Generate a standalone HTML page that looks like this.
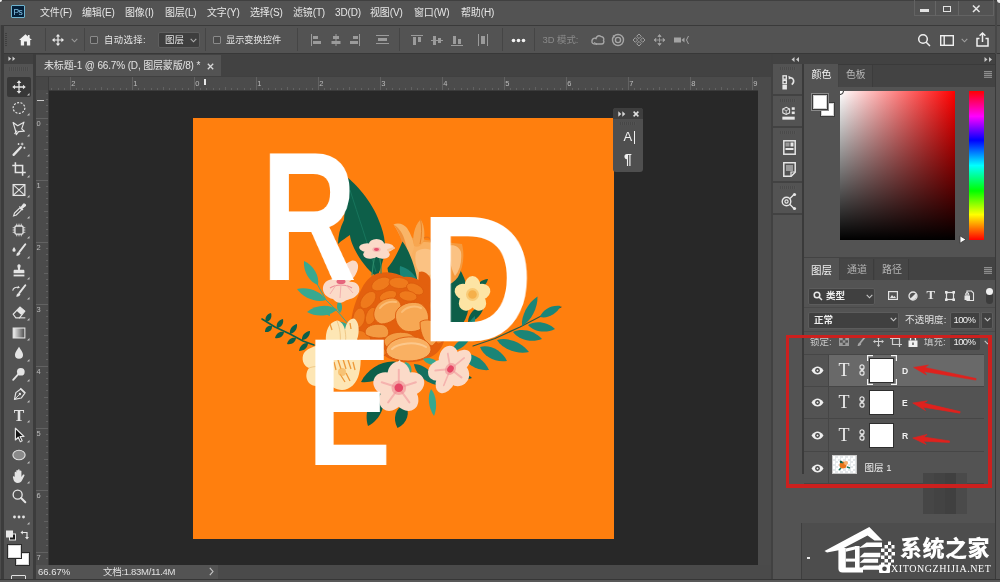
<!DOCTYPE html>
<html lang="zh-CN">
<head>
<meta charset="utf-8">
<title>Photoshop</title>
<style>
*{box-sizing:border-box;margin:0;padding:0}
html,body{width:1000px;height:582px;overflow:hidden;background:#535353}
body{font-family:"Liberation Sans","Noto Sans CJK SC",sans-serif;font-size:10px;color:#dcdcdc;position:relative}
.a{position:absolute}
.t{position:absolute;white-space:nowrap;line-height:12px;font-size:10px;color:#e2e2e2}
svg{position:absolute;overflow:visible}
#menubar{left:0;top:0;width:1000px;height:25px;background:#535353;border-top:1px solid #404040}
#menubar .t{top:6px;font-size:10px;color:#e6e6e6;letter-spacing:-0.15px}
#optbar{left:0;top:25px;width:1000px;height:29px;background:#535353;border-top:1px solid #3a3a3a;border-bottom:1px solid #383838}
.sep{position:absolute;top:28px;width:1px;height:23px;background:#454545}
.cb{position:absolute;top:36px;width:8px;height:8px;border:1px solid #8a8a8a;border-radius:1px;background:#4a4a4a}
#toolbar{left:0;top:54px;width:33px;height:528px;background:#535353;border-left:1px solid #3a3a3a}
#toolgap{left:33px;top:54px;width:3px;height:528px;background:#3c3c3c}
#tabbar{left:36px;top:54px;width:736px;height:23px;background:#424242}
#doctab{left:0;top:1px;width:184.500px;height:22px;background:#535353}
#hruler{left:36px;top:76px;width:722.500px;height:15px;background:#4b4b4b;border-top:1px solid #404040;border-bottom:1px solid #3a3a3a}
#vruler{left:36px;top:90px;width:13px;height:475px;background:#4b4b4b;border-right:1px solid #3a3a3a}
.rl{position:absolute;font-size:7.500px;line-height:8px;color:#bcbcbc}
#canvas{left:49px;top:91px;width:709px;height:474px;background:#282828}
#vscroll{left:758px;top:77px;width:13px;height:488px;background:#4b4b4b}
#status{left:37px;top:565px;width:735px;height:13.500px;background:#4a4a4a}
#botline{left:0;top:578.500px;width:1000px;height:3.500px;background:#585858;border-top:1.500px solid #363636}
#dockgap{left:770.500px;top:54px;width:2px;height:528px;background:#414141}
#rightdock{left:773px;top:54px;width:227px;height:526px;background:#424242}
.ltr{font-family:"Liberation Sans",sans-serif;font-weight:bold;font-size:181px;line-height:181px;color:#fff;transform-origin:0 0;transform:scaleX(0.7)}
#app{position:absolute;left:0;top:0;width:1000px;height:582px;overflow:hidden;will-change:transform;transform:translateZ(0)}

</style>
</head>
<body>
<div id="app">
<div id="menubar" class="a">
  <div class="a" style="left:11px;top:4px;width:13.500px;height:13px;background:#04203a;border:1px solid #6fb4cf;border-radius:1px"></div><div class="a" style="left:-2px;top:-3px;width:4px;height:4px;background:#eee;border-radius:50%"></div>
  <span class="t" style="left:13.500px;top:5px;font-size:8.500px;color:#86c6ea;letter-spacing:-0.600px">Ps</span>
  <span class="t" style="left:40px">文件(F)</span>
  <span class="t" style="left:82px">编辑(E)</span>
  <span class="t" style="left:125px">图像(I)</span>
  <span class="t" style="left:165px">图层(L)</span>
  <span class="t" style="left:207px">文字(Y)</span>
  <span class="t" style="left:250px">选择(S)</span>
  <span class="t" style="left:293px">滤镜(T)</span>
  <span class="t" style="left:335px">3D(D)</span>
  <span class="t" style="left:370px">视图(V)</span>
  <span class="t" style="left:414px">窗口(W)</span>
  <span class="t" style="left:461px">帮助(H)</span>
  <div class="a" style="left:914px;top:-1px;width:80px;height:16px;border:1px solid #636363;border-top:none"></div><div class="a" style="left:997px;top:-4px;width:6px;height:6px;background:#eee;border-radius:50%"></div>
  <div class="a" style="left:935px;top:0;width:1px;height:15px;background:#666"></div>
  <div class="a" style="left:958px;top:0;width:1px;height:15px;background:#666"></div>
  <div class="a" style="left:920px;top:8px;width:9px;height:2.500px;background:#e2e2e2"></div>
  <div class="a" style="left:942.500px;top:4.500px;width:8px;height:6.500px;border:1.800px solid #e2e2e2"></div>
  <svg style="left:971.500px;top:4px" width="8.500" height="7.500" viewBox="0 0 9 8"><path d="M1 0.5L8 7.5M8 0.5L1 7.5" stroke="#e6e6e6" stroke-width="1.6" fill="none"/></svg>
</div>
<div id="optbar" class="a"></div>
<div class="a" style="left:995px;top:1px;width:2px;height:53px;background:#474747"></div>
<!-- options bar items (page coords) -->
<div class="a" style="left:5px;top:33px;width:2px;height:14px;background:repeating-linear-gradient(#3f3f3f 0 1px,#535353 1px 2px)"></div>
<svg style="left:19px;top:34px" width="13" height="12" viewBox="0 0 13 12"><path d="M6.5 0.3L0 6h1.8v5.6h3.3V7.6h2.8v4h3.3V6H13L10.6 3.9V1H8.9v1.4z" fill="#f0f0f0"/></svg>
<div class="sep" style="left:45px"></div>
<svg style="left:52px;top:34px" width="12" height="12" viewBox="0 0 12 12"><path d="M6 0L3.8 2.6h1.6v2.8H2.6V3.8L0 6l2.6 2.2V6.6h2.8v2.8H3.8L6 12l2.2-2.6H6.6V6.6h2.8v1.6L12 6 9.4 3.8v1.6H6.6V2.6h1.6z" fill="#ededed"/></svg>
<svg style="left:71px;top:38px" width="7" height="5" viewBox="0 0 7 5"><path d="M0.7 0.8L3.5 3.8 6.3 0.8" stroke="#9a9a9a" stroke-width="1.1" fill="none"/></svg>
<div class="sep" style="left:84px"></div>
<div class="cb" style="left:90px"></div>
<span class="t" style="left:104px;top:34px;font-size:9.400px;letter-spacing:0.400px">自动选择:</span>
<div class="a" style="left:158px;top:32px;width:42px;height:16px;background:#3e3e3e;border:1px solid #5e5e5e;border-radius:2px"></div>
<span class="t" style="left:165px;top:34px;font-size:9.500px">图层</span>
<svg style="left:190px;top:38px" width="7" height="5" viewBox="0 0 7 5"><path d="M0.7 0.8L3.5 3.8 6.3 0.8" stroke="#b0b0b0" stroke-width="1.1" fill="none"/></svg>
<div class="sep" style="left:205px"></div>
<div class="cb" style="left:213px"></div>
<span class="t" style="left:226px;top:34px;font-size:9.200px">显示变换控件</span>
<div class="sep" style="left:297px"></div>
<!-- align icons -->
<svg style="left:310px;top:34px" width="190" height="13" viewBox="0 0 190 13" fill="#9b9b9b">
  <rect x="1" y="0" width="1" height="12"/><rect x="3" y="2" width="5" height="3"/><rect x="3" y="7" width="8" height="3"/>
  <rect x="25.5" y="0" width="1" height="12"/><rect x="23" y="2" width="6" height="3"/><rect x="21.5" y="7" width="9" height="3"/>
  <rect x="49" y="0" width="1" height="12"/><rect x="43" y="2" width="5" height="3"/><rect x="40" y="7" width="8" height="3"/>
  <rect x="66" y="1" width="13" height="1"/><rect x="68" y="4" width="9" height="3"/><rect x="66" y="9" width="13" height="1"/>
  <rect x="101" y="1" width="12" height="1"/><rect x="103" y="3" width="3" height="8"/><rect x="108" y="3" width="3" height="5"/>
  <rect x="121" y="6" width="12" height="1"/><rect x="123" y="2" width="3" height="9"/><rect x="128" y="4" width="3" height="5"/>
  <rect x="141" y="11" width="12" height="1"/><rect x="143" y="2" width="3" height="8"/><rect x="148" y="5" width="3" height="5"/>
  <rect x="168" y="0" width="1" height="12"/><rect x="171" y="2" width="4" height="8"/><rect x="177" y="0" width="1" height="12"/>
</svg>
<div class="sep" style="left:399px"></div>
<div class="sep" style="left:502px"></div>
<svg style="left:512px;top:39px" width="13" height="3" viewBox="0 0 13 3" fill="#f2f2f2"><circle cx="1.500" cy="1.500" r="1.800"/><circle cx="6.500" cy="1.500" r="1.800"/><circle cx="11.500" cy="1.500" r="1.800"/></svg>
<div class="sep" style="left:534px"></div>
<span class="t" style="left:542.500px;top:34px;font-size:9.400px;color:#8a8a8a">3D 模式:</span>
<svg style="left:590px;top:33px" width="100" height="14" viewBox="0 0 100 14" fill="none" stroke="#a6a6a6" stroke-width="1.400">
  <path d="M2 8c0-2 2-3.5 4-2.5C6.500 3 9 2 11 3.500c2 0 3.500 2 2.500 4 1 1.500 0 3.500-2 3.500H5.500C3 11 1.500 10 2 8z"/><path d="M4 9.500l3 1.500-1 .8" stroke-width="1"/>
  <circle cx="28" cy="7" r="5.500"/><circle cx="28" cy="7" r="2.600"/><path d="M23 2.500l1.500 1.800" stroke-width="1.300"/>
  <path d="M49 1l2.300 2.300L49 5.600 46.700 3.300zM49 8.400l2.300 2.300L49 13l-2.300-2.300zM43 7l2.300-2.300L47.600 7l-2.300 2.300zM55 7l-2.300-2.300L50.400 7l2.300 2.300z" stroke-width="0.9"/>
  <path d="M69.500 4.500v5M67 7h5M69.500 1.500l1.600 2h-3.200zM69.500 12.500l1.600-2h-3.200zM64 7l2-1.600v3.200zM75 7l-2-1.600v3.200z" fill="#a3a3a3" stroke-width="0.8"/>
  <rect x="84" y="4.500" width="7" height="5" fill="#a3a3a3" stroke="none"/><path d="M91.500 7l3-2.500v5z" fill="#a3a3a3" stroke="none"/><path d="M98.500 3l-2 4 2 4" stroke-width="1"/>
</svg>
<!-- right side of options bar -->
<svg style="left:917px;top:33px" width="14" height="14" viewBox="0 0 14 14" fill="none" stroke="#f0f0f0" stroke-width="1.500"><circle cx="6" cy="6" r="4.300"/><path d="M9.200 9.200L13 13"/></svg>
<svg style="left:940px;top:35px" width="14" height="11" viewBox="0 0 14 11" fill="none" stroke="#f0f0f0" stroke-width="1.400"><rect x="0.700" y="0.700" width="12.600" height="9.600"/><path d="M4.200 1v9"/></svg>
<svg style="left:961px;top:38px" width="7" height="5" viewBox="0 0 7 5"><path d="M0.700 0.800L3.500 3.800 6.300 0.800" stroke="#a0a0a0" stroke-width="1.100" fill="none"/></svg>
<svg style="left:976px;top:32px" width="13" height="15" viewBox="0 0 13 15" fill="none" stroke="#f0f0f0" stroke-width="1.500"><path d="M3.500 6.500H1v7.500h11V6.500H9.500"/><path d="M6.500 10V1.200M3.600 3.800L6.500 1l2.900 2.800"/></svg>

<div id="toolbar" class="a"></div><div id="toolgap" class="a"></div>
<div class="a" style="left:0;top:25px;width:3.500px;height:557px;background:#3c3c3c;border-left:1.300px solid #4c4c4c"></div>
<div class="a" style="left:3.500px;top:54px;width:29.500px;height:10px;background:#414141"></div>
<svg style="left:7.500px;top:56px" width="9" height="5.500" viewBox="0 0 10 6" fill="#d0d0d0"><path d="M0.500 0.500L3.500 3 0.500 5.500zM5 0.500L8 3 5 5.500z"/></svg>
<div class="a" style="left:9px;top:67px;width:20px;height:4px;background:repeating-linear-gradient(90deg,#4a4a4a 0 1px,#565656 1px 2px)"></div>
<div class="a" style="left:7px;top:77px;width:24px;height:20px;background:#383838;border-radius:2px"></div>
<svg style="left:10px;top:78.3px" width="18" height="18" viewBox="0 0 20 20"><path d="M10 2.500L7.400 5.600h1.900v3.700H5.600V7.400L2.500 10l3.100 2.600v-1.900h3.700v3.700H7.400L10 17.500l2.600-3.100h-1.900v-3.700h3.700v1.900L17.500 10l-3.100-2.600v1.900h-3.700V5.600h1.900z" fill="#e4e4e4"/></svg>
<svg style="left:26.500px;top:92.8px" width="2.500" height="2.500" viewBox="0 0 3 3"><path d="M3 0v3H0z" fill="#c4c4c4"/></svg>
<svg style="left:10px;top:98.8px" width="18" height="18" viewBox="0 0 20 20"><ellipse cx="10" cy="10" rx="6.500" ry="6" fill="none" stroke="#e4e4e4" stroke-width="1.300" stroke-dasharray="2.200 1.600"/></svg>
<svg style="left:26.500px;top:113.2px" width="2.500" height="2.500" viewBox="0 0 3 3"><path d="M3 0v3H0z" fill="#c4c4c4"/></svg>
<svg style="left:10px;top:119.2px" width="18" height="18" viewBox="0 0 20 20"><path d="M3.500 4l5 3.500 7-4-2.500 7.500 3 2.500-6.500.500-2.500 3.500-1-5z" fill="none" stroke="#e4e4e4" stroke-width="1.300" stroke-linejoin="round"/><path d="M8 13l-3 3.500" stroke="#e4e4e4" stroke-width="1.200"/></svg>
<svg style="left:26.500px;top:133.7px" width="2.500" height="2.500" viewBox="0 0 3 3"><path d="M3 0v3H0z" fill="#c4c4c4"/></svg>
<svg style="left:10px;top:139.6px" width="18" height="18" viewBox="0 0 20 20"><path d="M4 16.500L12 8" stroke="#e4e4e4" stroke-width="2.600" stroke-linecap="round"/><path d="M13.500 3v3M12 4.500h3M16 7.500v2.400M14.800 8.700h2.400M9.500 3.500v2M8.500 4.500h2" stroke="#e4e4e4" stroke-width="1"/></svg>
<svg style="left:26.500px;top:154.1px" width="2.500" height="2.500" viewBox="0 0 3 3"><path d="M3 0v3H0z" fill="#c4c4c4"/></svg>
<svg style="left:10px;top:160.1px" width="18" height="18" viewBox="0 0 20 20"><path d="M6 2.500v11.500h11.500M2.500 6h11.500v11.500" fill="none" stroke="#e4e4e4" stroke-width="1.700"/></svg>
<svg style="left:26.500px;top:174.6px" width="2.500" height="2.500" viewBox="0 0 3 3"><path d="M3 0v3H0z" fill="#c4c4c4"/></svg>
<svg style="left:10px;top:180.6px" width="18" height="18" viewBox="0 0 20 20"><rect x="3.500" y="4" width="13" height="12" fill="none" stroke="#e4e4e4" stroke-width="1.400"/><path d="M3.500 4l13 12M16.500 4l-13 12" stroke="#e4e4e4" stroke-width="1.200"/></svg>
<svg style="left:26.500px;top:195.1px" width="2.500" height="2.500" viewBox="0 0 3 3"><path d="M3 0v3H0z" fill="#c4c4c4"/></svg>
<svg style="left:10px;top:201.0px" width="18" height="18" viewBox="0 0 20 20"><path d="M4 16.500l1-3 6-6 2 2-6 6z" fill="none" stroke="#e4e4e4" stroke-width="1.300"/><path d="M10.500 6l4 4M12 7.500l3-4c1-1 3 1 2 2l-4 3z" fill="#e4e4e4" stroke="#e4e4e4" stroke-width="1.200"/></svg>
<svg style="left:26.500px;top:215.5px" width="2.500" height="2.500" viewBox="0 0 3 3"><path d="M3 0v3H0z" fill="#c4c4c4"/></svg>
<svg style="left:10px;top:221.4px" width="18" height="18" viewBox="0 0 20 20"><rect x="5.500" y="5.500" width="9" height="9" rx="1.500" fill="none" stroke="#e4e4e4" stroke-width="1.500"/><path d="M7.500 3v2.500M10 3v2.500M12.500 3v2.500M7.500 14.500V17M10 14.500V17M12.500 14.500V17M3 7.500h2.500M3 10h2.500M3 12.500h2.500M14.500 7.500H17M14.500 10H17M14.500 12.500H17" stroke="#e4e4e4" stroke-width="1"/></svg>
<svg style="left:26.500px;top:235.9px" width="2.500" height="2.500" viewBox="0 0 3 3"><path d="M3 0v3H0z" fill="#c4c4c4"/></svg>
<svg style="left:10px;top:241.9px" width="18" height="18" viewBox="0 0 20 20"><path d="M17 2.500L10.500 11" stroke="#e4e4e4" stroke-width="2.200" stroke-linecap="round"/><path d="M9.800 11.200c-2 .300-2.500 2-2.800 4 2 .300 4-.500 4.600-2.600z" fill="#e4e4e4"/><path d="M4.500 5.500c1 1.500 1.800 2.600 1.800 3.600a1.800 1.800 0 0 1-3.600 0c0-1 .800-2.100 1.800-3.600z" fill="#e4e4e4"/></svg>
<svg style="left:26.500px;top:256.4px" width="2.500" height="2.500" viewBox="0 0 3 3"><path d="M3 0v3H0z" fill="#c4c4c4"/></svg>
<svg style="left:10px;top:262.3px" width="18" height="18" viewBox="0 0 20 20"><path d="M8.300 3.500a1.900 1.900 0 0 1 3.400 0c.500 1.500-.700 3-.700 5h3.500c1 0 1.500.500 1.500 1.500v2.500H4V10c0-1 .500-1.500 1.500-1.500H9c0-2-1.200-3.500-.700-5z" fill="#e4e4e4"/><rect x="4" y="14" width="12" height="2" fill="#e4e4e4"/></svg>
<svg style="left:26.500px;top:276.8px" width="2.500" height="2.500" viewBox="0 0 3 3"><path d="M3 0v3H0z" fill="#c4c4c4"/></svg>
<svg style="left:10px;top:282.8px" width="18" height="18" viewBox="0 0 20 20"><path d="M17 2.500L10.500 11" stroke="#e4e4e4" stroke-width="2.200" stroke-linecap="round"/><path d="M9.800 11.200c-2 .300-2.500 2-2.800 4 2 .300 4-.500 4.600-2.600z" fill="#e4e4e4"/><path d="M3 8.500c.500-3 3.500-4.500 6.500-3.500" fill="none" stroke="#e4e4e4" stroke-width="1.200"/><path d="M9 3l2 2.300-3 .700z" fill="#e4e4e4"/></svg>
<svg style="left:26.500px;top:297.3px" width="2.500" height="2.500" viewBox="0 0 3 3"><path d="M3 0v3H0z" fill="#c4c4c4"/></svg>
<svg style="left:10px;top:303.2px" width="18" height="18" viewBox="0 0 20 20"><path d="M3.500 12.500l7.500-8 5.500 4.500-6 7.500h-4z" fill="none" stroke="#e4e4e4" stroke-width="1.300" stroke-linejoin="round"/><path d="M7.300 8.500l5.300 4.800 3.900-4.300-5.500-4.500z" fill="#e4e4e4"/><path d="M10 16.500h7" stroke="#e4e4e4" stroke-width="1.200"/></svg>
<svg style="left:26.500px;top:317.8px" width="2.500" height="2.500" viewBox="0 0 3 3"><path d="M3 0v3H0z" fill="#c4c4c4"/></svg>
<svg style="left:10px;top:323.7px" width="18" height="18" viewBox="0 0 20 20"><defs><linearGradient id="gtool" x1="0" x2="1"><stop offset="0" stop-color="#f4f4f4"/><stop offset="1" stop-color="#4a4a4a"/></linearGradient></defs><rect x="3.500" y="4.500" width="13" height="11" fill="url(#gtool)" stroke="#e4e4e4" stroke-width="1.200"/></svg>
<svg style="left:26.500px;top:338.2px" width="2.500" height="2.500" viewBox="0 0 3 3"><path d="M3 0v3H0z" fill="#c4c4c4"/></svg>
<svg style="left:10px;top:344.1px" width="18" height="18" viewBox="0 0 20 20"><path d="M10 3c2 3.500 4.500 6 4.500 9a4.500 4.500 0 0 1-9 0c0-3 2.500-5.500 4.500-9z" fill="#e4e4e4"/></svg>
<svg style="left:26.500px;top:358.6px" width="2.500" height="2.500" viewBox="0 0 3 3"><path d="M3 0v3H0z" fill="#c4c4c4"/></svg>
<svg style="left:10px;top:364.6px" width="18" height="18" viewBox="0 0 20 20"><circle cx="12" cy="7.500" r="4.300" fill="#e4e4e4"/><path d="M9 10.500l-5.500 6" stroke="#e4e4e4" stroke-width="2" stroke-linecap="round"/></svg>
<svg style="left:26.500px;top:379.1px" width="2.500" height="2.500" viewBox="0 0 3 3"><path d="M3 0v3H0z" fill="#c4c4c4"/></svg>
<svg style="left:10px;top:385.1px" width="18" height="18" viewBox="0 0 20 20"><path d="M5 16l1.500-7.500 5.500-4 4.500 4.500-4 5.500z" fill="none" stroke="#e4e4e4" stroke-width="1.300" stroke-linejoin="round"/><path d="M5 16l5.500-5.500" stroke="#e4e4e4" stroke-width="1.100"/><circle cx="11" cy="10" r="1.300" fill="#e4e4e4"/><path d="M11.500 3.500l5.500 5.500" stroke="#e4e4e4" stroke-width="1.600"/></svg>
<svg style="left:26.500px;top:399.6px" width="2.500" height="2.500" viewBox="0 0 3 3"><path d="M3 0v3H0z" fill="#c4c4c4"/></svg>
<svg style="left:10px;top:405.5px" width="18" height="18" viewBox="0 0 20 20"><text x="10" y="16.500" text-anchor="middle" font-family="Liberation Serif,serif" font-size="17.500" font-weight="bold" fill="#e4e4e4">T</text></svg>
<svg style="left:26.500px;top:420.0px" width="2.500" height="2.500" viewBox="0 0 3 3"><path d="M3 0v3H0z" fill="#c4c4c4"/></svg>
<svg style="left:10px;top:425.9px" width="18" height="18" viewBox="0 0 20 20"><path d="M6 2.500v13l3.200-3 2.300 5 2-1-2.300-4.800h4.300z" fill="#151515" stroke="#e4e4e4" stroke-width="1.300" stroke-linejoin="round"/></svg>
<svg style="left:26.500px;top:440.4px" width="2.500" height="2.500" viewBox="0 0 3 3"><path d="M3 0v3H0z" fill="#c4c4c4"/></svg>
<svg style="left:10px;top:446.4px" width="18" height="18" viewBox="0 0 20 20"><ellipse cx="10" cy="10" rx="6.800" ry="5.300" fill="#8a8a8a" stroke="#e4e4e4" stroke-width="1.200"/></svg>
<svg style="left:26.500px;top:460.9px" width="2.500" height="2.500" viewBox="0 0 3 3"><path d="M3 0v3H0z" fill="#c4c4c4"/></svg>
<svg style="left:10px;top:466.9px" width="18" height="18" viewBox="0 0 20 20"><path d="M5.200 11.200V6.300c0-1.300 1.800-1.300 1.800 0V9.500V4.200c0-1.300 1.900-1.300 1.900 0V9.200V3.500c0-1.300 1.900-1.300 1.900 0V9.400V4.800c0-1.300 1.900-1.300 1.900 0V11l1.600-2.300c.800-1.100 2.400-.200 1.700 1.100l-2.600 4.800c-1 2-2.400 3.100-4.800 3.100-2.600 0-3.800-1.200-4.600-3.200L3.300 11.600c-.500-1.300 1.200-2 1.900-.400z" fill="#e4e4e4"/></svg>
<svg style="left:26.500px;top:481.4px" width="2.500" height="2.500" viewBox="0 0 3 3"><path d="M3 0v3H0z" fill="#c4c4c4"/></svg>
<svg style="left:10px;top:487.3px" width="18" height="18" viewBox="0 0 20 20"><circle cx="8.500" cy="8.500" r="5" fill="none" stroke="#e4e4e4" stroke-width="1.500"/><path d="M12.300 12.300L17 17" stroke="#e4e4e4" stroke-width="2.200" stroke-linecap="round"/></svg>
<svg style="left:10px;top:507.8px" width="18" height="18" viewBox="0 0 20 20"><circle cx="5" cy="10" r="1.600" fill="#e4e4e4"/><circle cx="10" cy="10" r="1.600" fill="#e4e4e4"/><circle cx="15" cy="10" r="1.600" fill="#e4e4e4"/></svg>
<svg style="left:26.500px;top:522.2px" width="2.500" height="2.500" viewBox="0 0 3 3"><path d="M3 0v3H0z" fill="#c4c4c4"/></svg>
<svg style="left:6px;top:530px" width="26" height="11" viewBox="0 0 26 11"><rect x="3.500" y="4" width="6" height="6" fill="#1a1a1a" stroke="#e8e8e8" stroke-width="1"/><rect x="0.500" y="1" width="6" height="6" fill="#e8e8e8" stroke="#e8e8e8" stroke-width="1"/><path d="M15.500 2.500h5.500v5.500" fill="none" stroke="#e8e8e8" stroke-width="1.200"/><path d="M16.800 0.500L14.500 2.500l2.300 2zM19 7l2 2.500 2-2.500z" fill="#e8e8e8"/></svg>
<div class="a" style="left:15px;top:552px;width:15px;height:14px;background:#fff;border:1px solid #2a2a2a;box-shadow:0 0 0 1px #d8d8d8 inset"></div>
<div class="a" style="left:7px;top:544px;width:15px;height:15px;background:#fff;border:1px solid #2a2a2a;box-shadow:0 0 0 1px #d8d8d8 inset"></div>
<div class="a" style="left:11px;top:575px;width:15px;height:8px;border:1.500px solid #e0e0e0;border-radius:1px"></div>
<div id="tabbar" class="a"><div id="doctab" class="a"></div></div>
<span class="t" style="left:44px;top:60px;font-size:10px;color:#e4e4e4;letter-spacing:-0.150px">未标题-1 @ 66.7% (D, 图层蒙版/8) *</span>
<svg style="left:207px;top:63px" width="7" height="7" viewBox="0 0 7 7"><path d="M0.8 0.8L6.2 6.2M6.200 0.800L0.800 6.200" stroke="#d8d8d8" stroke-width="1.300" fill="none"/></svg>
<div id="hruler" class="a"></div>
<div id="vruler" class="a"></div>
<div class="a" style="left:36px;top:77px;width:12.500px;height:13px;background:#474747;border-right:1px solid #3c3c3c"></div>
<svg style="left:0;top:0" width="1000" height="582" fill="#626262" shape-rendering="crispEdges"><rect x="51.4" y="88" width="1" height="2" /><rect x="57.6" y="88" width="1" height="2" /><rect x="63.8" y="88" width="1" height="2" /><rect x="70.0" y="77" width="1" height="13" /><rect x="76.2" y="88" width="1" height="2" /><rect x="82.4" y="88" width="1" height="2" /><rect x="88.6" y="88" width="1" height="2" /><rect x="94.8" y="88" width="1" height="2" /><rect x="101.0" y="86.500" width="1" height="3.500" /><rect x="107.2" y="88" width="1" height="2" /><rect x="113.4" y="88" width="1" height="2" /><rect x="119.6" y="88" width="1" height="2" /><rect x="125.8" y="88" width="1" height="2" /><rect x="132.0" y="77" width="1" height="13" /><rect x="138.2" y="88" width="1" height="2" /><rect x="144.4" y="88" width="1" height="2" /><rect x="150.6" y="88" width="1" height="2" /><rect x="156.8" y="88" width="1" height="2" /><rect x="163.0" y="86.500" width="1" height="3.500" /><rect x="169.2" y="88" width="1" height="2" /><rect x="175.4" y="88" width="1" height="2" /><rect x="181.6" y="88" width="1" height="2" /><rect x="187.8" y="88" width="1" height="2" /><rect x="194.0" y="77" width="1" height="13" /><rect x="200.2" y="88" width="1" height="2" /><rect x="206.4" y="88" width="1" height="2" /><rect x="212.6" y="88" width="1" height="2" /><rect x="218.8" y="88" width="1" height="2" /><rect x="225.0" y="86.500" width="1" height="3.500" /><rect x="231.2" y="88" width="1" height="2" /><rect x="237.4" y="88" width="1" height="2" /><rect x="243.6" y="88" width="1" height="2" /><rect x="249.8" y="88" width="1" height="2" /><rect x="256.0" y="77" width="1" height="13" /><rect x="262.2" y="88" width="1" height="2" /><rect x="268.4" y="88" width="1" height="2" /><rect x="274.6" y="88" width="1" height="2" /><rect x="280.8" y="88" width="1" height="2" /><rect x="287.0" y="86.500" width="1" height="3.500" /><rect x="293.2" y="88" width="1" height="2" /><rect x="299.4" y="88" width="1" height="2" /><rect x="305.6" y="88" width="1" height="2" /><rect x="311.8" y="88" width="1" height="2" /><rect x="318.0" y="77" width="1" height="13" /><rect x="324.2" y="88" width="1" height="2" /><rect x="330.4" y="88" width="1" height="2" /><rect x="336.6" y="88" width="1" height="2" /><rect x="342.8" y="88" width="1" height="2" /><rect x="349.0" y="86.500" width="1" height="3.500" /><rect x="355.2" y="88" width="1" height="2" /><rect x="361.4" y="88" width="1" height="2" /><rect x="367.6" y="88" width="1" height="2" /><rect x="373.8" y="88" width="1" height="2" /><rect x="380.0" y="77" width="1" height="13" /><rect x="386.2" y="88" width="1" height="2" /><rect x="392.4" y="88" width="1" height="2" /><rect x="398.6" y="88" width="1" height="2" /><rect x="404.8" y="88" width="1" height="2" /><rect x="411.0" y="86.500" width="1" height="3.500" /><rect x="417.2" y="88" width="1" height="2" /><rect x="423.4" y="88" width="1" height="2" /><rect x="429.6" y="88" width="1" height="2" /><rect x="435.8" y="88" width="1" height="2" /><rect x="442.0" y="77" width="1" height="13" /><rect x="448.2" y="88" width="1" height="2" /><rect x="454.4" y="88" width="1" height="2" /><rect x="460.6" y="88" width="1" height="2" /><rect x="466.8" y="88" width="1" height="2" /><rect x="473.0" y="86.500" width="1" height="3.500" /><rect x="479.2" y="88" width="1" height="2" /><rect x="485.4" y="88" width="1" height="2" /><rect x="491.6" y="88" width="1" height="2" /><rect x="497.8" y="88" width="1" height="2" /><rect x="504.0" y="77" width="1" height="13" /><rect x="510.2" y="88" width="1" height="2" /><rect x="516.4" y="88" width="1" height="2" /><rect x="522.6" y="88" width="1" height="2" /><rect x="528.8" y="88" width="1" height="2" /><rect x="535.0" y="86.500" width="1" height="3.500" /><rect x="541.2" y="88" width="1" height="2" /><rect x="547.4" y="88" width="1" height="2" /><rect x="553.6" y="88" width="1" height="2" /><rect x="559.8" y="88" width="1" height="2" /><rect x="566.0" y="77" width="1" height="13" /><rect x="572.2" y="88" width="1" height="2" /><rect x="578.4" y="88" width="1" height="2" /><rect x="584.6" y="88" width="1" height="2" /><rect x="590.8" y="88" width="1" height="2" /><rect x="597.0" y="86.500" width="1" height="3.500" /><rect x="603.2" y="88" width="1" height="2" /><rect x="609.4" y="88" width="1" height="2" /><rect x="615.6" y="88" width="1" height="2" /><rect x="621.8" y="88" width="1" height="2" /><rect x="628.0" y="77" width="1" height="13" /><rect x="634.2" y="88" width="1" height="2" /><rect x="640.4" y="88" width="1" height="2" /><rect x="646.6" y="88" width="1" height="2" /><rect x="652.8" y="88" width="1" height="2" /><rect x="659.0" y="86.500" width="1" height="3.500" /><rect x="665.2" y="88" width="1" height="2" /><rect x="671.4" y="88" width="1" height="2" /><rect x="677.6" y="88" width="1" height="2" /><rect x="683.8" y="88" width="1" height="2" /><rect x="690.0" y="77" width="1" height="13" /><rect x="696.2" y="88" width="1" height="2" /><rect x="702.4" y="88" width="1" height="2" /><rect x="708.6" y="88" width="1" height="2" /><rect x="714.8" y="88" width="1" height="2" /><rect x="721.0" y="86.500" width="1" height="3.500" /><rect x="727.2" y="88" width="1" height="2" /><rect x="733.4" y="88" width="1" height="2" /><rect x="739.6" y="88" width="1" height="2" /><rect x="745.8" y="88" width="1" height="2" /><rect x="752.0" y="77" width="1" height="13" /><rect x="46" y="92.7" width="2" height="1" /><rect x="46" y="98.9" width="2" height="1" /><rect x="46" y="105.1" width="2" height="1" /><rect x="46" y="111.3" width="2" height="1" /><rect x="36" y="117.5" width="12" height="1" /><rect x="46" y="123.7" width="2" height="1" /><rect x="46" y="129.9" width="2" height="1" /><rect x="46" y="136.1" width="2" height="1" /><rect x="46" y="142.3" width="2" height="1" /><rect x="44" y="148.5" width="4" height="1" /><rect x="46" y="154.7" width="2" height="1" /><rect x="46" y="160.9" width="2" height="1" /><rect x="46" y="167.1" width="2" height="1" /><rect x="46" y="173.3" width="2" height="1" /><rect x="36" y="179.5" width="12" height="1" /><rect x="46" y="185.7" width="2" height="1" /><rect x="46" y="191.9" width="2" height="1" /><rect x="46" y="198.1" width="2" height="1" /><rect x="46" y="204.3" width="2" height="1" /><rect x="44" y="210.5" width="4" height="1" /><rect x="46" y="216.7" width="2" height="1" /><rect x="46" y="222.9" width="2" height="1" /><rect x="46" y="229.1" width="2" height="1" /><rect x="46" y="235.3" width="2" height="1" /><rect x="36" y="241.5" width="12" height="1" /><rect x="46" y="247.7" width="2" height="1" /><rect x="46" y="253.9" width="2" height="1" /><rect x="46" y="260.1" width="2" height="1" /><rect x="46" y="266.3" width="2" height="1" /><rect x="44" y="272.5" width="4" height="1" /><rect x="46" y="278.7" width="2" height="1" /><rect x="46" y="284.9" width="2" height="1" /><rect x="46" y="291.1" width="2" height="1" /><rect x="46" y="297.3" width="2" height="1" /><rect x="36" y="303.5" width="12" height="1" /><rect x="46" y="309.7" width="2" height="1" /><rect x="46" y="315.9" width="2" height="1" /><rect x="46" y="322.1" width="2" height="1" /><rect x="46" y="328.3" width="2" height="1" /><rect x="44" y="334.5" width="4" height="1" /><rect x="46" y="340.7" width="2" height="1" /><rect x="46" y="346.9" width="2" height="1" /><rect x="46" y="353.1" width="2" height="1" /><rect x="46" y="359.3" width="2" height="1" /><rect x="36" y="365.5" width="12" height="1" /><rect x="46" y="371.7" width="2" height="1" /><rect x="46" y="377.9" width="2" height="1" /><rect x="46" y="384.1" width="2" height="1" /><rect x="46" y="390.3" width="2" height="1" /><rect x="44" y="396.5" width="4" height="1" /><rect x="46" y="402.7" width="2" height="1" /><rect x="46" y="408.9" width="2" height="1" /><rect x="46" y="415.1" width="2" height="1" /><rect x="46" y="421.3" width="2" height="1" /><rect x="36" y="427.5" width="12" height="1" /><rect x="46" y="433.7" width="2" height="1" /><rect x="46" y="439.9" width="2" height="1" /><rect x="46" y="446.1" width="2" height="1" /><rect x="46" y="452.3" width="2" height="1" /><rect x="44" y="458.5" width="4" height="1" /><rect x="46" y="464.7" width="2" height="1" /><rect x="46" y="470.9" width="2" height="1" /><rect x="46" y="477.1" width="2" height="1" /><rect x="46" y="483.3" width="2" height="1" /><rect x="36" y="489.5" width="12" height="1" /><rect x="46" y="495.7" width="2" height="1" /><rect x="46" y="501.9" width="2" height="1" /><rect x="46" y="508.1" width="2" height="1" /><rect x="46" y="514.3" width="2" height="1" /><rect x="44" y="520.5" width="4" height="1" /><rect x="46" y="526.7" width="2" height="1" /><rect x="46" y="532.9" width="2" height="1" /><rect x="46" y="539.1" width="2" height="1" /><rect x="46" y="545.3" width="2" height="1" /><rect x="36" y="551.5" width="12" height="1" /><rect x="46" y="557.7" width="2" height="1" /><rect x="204" y="79" width="2" height="6" fill="#e8e8e8"/><rect x="36.500" y="99.500" width="7.500" height="1.500" fill="#c8c8c8"/></svg>
<span class="rl" style="left:71.3px;top:80px">2</span>
<span class="rl" style="left:133.3px;top:80px">1</span>
<span class="rl" style="left:195.3px;top:80px">0</span>
<span class="rl" style="left:257.3px;top:80px">1</span>
<span class="rl" style="left:319.3px;top:80px">2</span>
<span class="rl" style="left:381.3px;top:80px">3</span>
<span class="rl" style="left:443.3px;top:80px">4</span>
<span class="rl" style="left:505.3px;top:80px">5</span>
<span class="rl" style="left:567.3px;top:80px">6</span>
<span class="rl" style="left:629.3px;top:80px">7</span>
<span class="rl" style="left:691.3px;top:80px">8</span>
<span class="rl" style="left:753.3px;top:80px">9</span>
<span class="rl" style="left:36.500px;top:119.5px">0</span>
<span class="rl" style="left:36.500px;top:181.5px">1</span>
<span class="rl" style="left:36.500px;top:243.5px">2</span>
<span class="rl" style="left:36.500px;top:305.5px">3</span>
<span class="rl" style="left:36.500px;top:367.5px">4</span>
<span class="rl" style="left:36.500px;top:429.5px">5</span>
<span class="rl" style="left:36.500px;top:491.5px">6</span>
<span class="rl" style="left:36.500px;top:553.5px">7</span>
<div id="canvas" class="a"></div>
<div id="vscroll" class="a"></div>
<div id="status" class="a"></div>
<div class="a" style="left:37px;top:565px;width:181px;height:13.500px;background:#535353"></div>
<span class="t" style="left:38px;top:566px;font-size:9.500px;color:#e6e6e6">66.67%</span>
<span class="t" style="left:103px;top:566px;font-size:9.500px;color:#e0e0e0;letter-spacing:-0.300px">文档:1.83M/11.4M</span>
<svg style="left:209px;top:567px" width="5" height="9" viewBox="0 0 5 9"><path d="M0.8 0.8L4 4.500 0.800 8.200" stroke="#c8c8c8" stroke-width="1.100" fill="none"/></svg>
<div id="art" class="a" style="left:193px;top:118px;width:421px;height:421px;background:#ff7f0e"></div>
<svg id="bouquet" style="left:0;top:0" width="1000" height="582" viewBox="0 0 1000 582">
<path d="M348 178C358 186 374 204 381 226C386 240 386 252 383 260C381 268 379 273 377 277C370 272 361 262 355 250C352 244 350 238 350 235C346 238 342 240 338 244C338 236 340 228 344 220C345 208 346 192 348 178z" fill="#0d5f49"/>
<path d="M350 190C358 215 368 245 376 272" stroke="#17755c" stroke-width="1" fill="none"/>
<path d="M316.0 282.0 L326.0 300.0 L338.0 312.0 L350.0 326.0" stroke="#38a88f" stroke-width="1" fill="none" stroke-linecap="round" stroke-linejoin="round"/>
<path d="M318.0 285.0C319.7 276.0 313.4 265.2 304.0 261.0C303.0 271.2 309.3 282.0 318.0 285.0z" fill="#38a88f"/>
<path d="M326.0 300.0C321.0 291.3 307.9 286.4 297.0 289.0C303.5 298.2 316.5 303.2 326.0 300.0z" fill="#38a88f"/>
<path d="M337.0 309.5C329.0 303.8 315.5 304.9 307.0 312.0C316.5 317.6 330.0 316.4 337.0 309.5z" fill="#38a88f"/>
<path d="M340.0 313.0C343.1 309.5 342.6 303.6 339.0 300.0C336.0 304.2 336.4 310.0 340.0 313.0z" fill="#38a88f"/>
<path d="M352.0 331.0C349.9 324.0 341.8 319.9 334.0 322.0C337.0 329.5 345.1 333.5 352.0 331.0z" fill="#38a88f"/>
<path d="M330.0 316.0C330.1 311.8 326.5 307.3 322.0 306.0C322.3 310.7 325.9 315.2 330.0 316.0z" fill="#38a88f"/>
<path d="M262.0 319.0 L275.0 327.0 L290.0 334.0 L303.0 341.0 L314.0 345.0" stroke="#0d5f49" stroke-width="1.6" fill="none" stroke-linecap="round" stroke-linejoin="round"/>
<path d="M266.0 322.0C270.2 321.4 272.4 317.3 271.0 313.0C266.6 314.1 264.3 318.1 266.0 322.0z" fill="#0d5f49"/>
<path d="M277.0 328.0C281.3 327.6 284.0 323.5 283.0 319.0C278.4 319.9 275.7 323.9 277.0 328.0z" fill="#0d5f49"/>
<path d="M290.0 334.0C294.5 333.4 297.6 328.9 297.0 324.0C292.2 325.1 289.0 329.6 290.0 334.0z" fill="#0d5f49"/>
<path d="M302.0 340.0C306.5 340.0 310.1 335.9 310.0 331.0C305.1 331.5 301.5 335.5 302.0 340.0z" fill="#0d5f49"/>
<path d="M272.0 326.0C268.1 325.0 264.9 327.7 265.0 332.0C269.3 332.7 272.4 330.0 272.0 326.0z" fill="#0d5f49"/>
<path d="M284.0 332.0C279.9 330.7 275.9 333.4 275.0 338.0C279.5 339.0 283.6 336.3 284.0 332.0z" fill="#0d5f49"/>
<path d="M296.0 338.0C291.9 336.7 287.9 339.4 287.0 344.0C291.5 345.0 295.6 342.3 296.0 338.0z" fill="#0d5f49"/>
<path d="M308.0 343.0C303.5 342.5 299.5 346.1 299.0 351.0C303.9 351.1 308.0 347.5 308.0 343.0z" fill="#0d5f49"/>
<path d="M473.0 346.0 L495.0 338.5 L520.0 327.0 L545.0 314.0 L561.0 307.0" stroke="#2a5a44" stroke-width="1.2" fill="none" stroke-linecap="round" stroke-linejoin="round"/>
<path d="M522.0 326.0C530.9 321.3 537.9 308.0 537.5 296.5C527.8 302.7 520.9 316.0 522.0 326.0z" fill="#1b8577"/>
<path d="M540.0 317.0C547.6 319.0 556.9 314.0 560.5 306.0C551.8 304.6 542.6 309.5 540.0 317.0z" fill="#1b8577"/>
<path d="M528.0 325.0C533.9 331.9 546.0 333.7 555.0 329.0C547.8 321.9 535.6 320.1 528.0 325.0z" fill="#1b8577"/>
<path d="M513.0 332.0C518.8 339.9 531.8 343.1 542.0 339.0C534.8 330.7 521.7 327.6 513.0 332.0z" fill="#1b8577"/>
<path d="M497.0 340.0C502.7 349.2 517.1 354.6 529.0 352.0C521.7 342.2 507.3 336.8 497.0 340.0z" fill="#1b8577"/>
<path d="M480.0 347.0C483.5 356.7 495.7 363.0 507.0 361.0C502.1 350.6 490.0 344.3 480.0 347.0z" fill="#1b8577"/>
<path d="M462.0 354.0C465.2 364.0 477.3 371.2 489.0 370.0C484.5 359.2 472.3 352.0 462.0 354.0z" fill="#1b8577"/>
<path d="M450 258C458 264 467 278 469 298C470 314 463 326 456 331L450 331z" fill="#0d5f49"/>
<path d="M468.0 322.0C475.9 321.4 483.1 313.8 484.0 305.0C475.3 306.4 468.1 314.1 468.0 322.0z" fill="#0d5f49"/>
<path d="M464.0 342.0C471.0 337.3 476.0 325.6 475.0 316.0C467.4 322.0 462.5 333.7 464.0 342.0z" fill="#1b8577"/>
<path d="M452.0 351.0C459.6 350.9 468.2 344.2 471.0 336.0C462.4 336.8 453.9 343.6 452.0 351.0z" fill="#1b8577"/>
<path d="M460.0 376.0C462.6 379.1 468.0 380.0 472.0 378.0C468.8 374.8 463.4 373.9 460.0 376.0z" fill="#0d5f49"/>
<path d="M406 240C412 236 420 238 426 240L462 244C465 256 463 268 458 277C450 288 432 292 418 288C408 284 404 272 405 258C405 252 405 246 406 240z" fill="#f59a3e"/>
<path d="M412 246C420 240 432 241 440 247C447 257 446 271 439 281C430 287 418 284 412 275C409 265 409 254 412 246z" fill="#f9b162"/>
<path d="M416 252C422 247 430 248 435 253C438 260 437 268 432 274C426 277 420 274 417 268C415 262 415 257 416 252z" fill="#fbc283"/>
<path d="M448 246C454 244 459 247 461 252C462 262 460 270 455 276C451 270 449 256 448 246z" fill="#fbc283"/>
<path d="M393.500 224.500C398 222 404 224 407 228C411 234 413 240 414.500 246C413 252 411 256 409 259C407 250 404 242 400 236C398 232 396 228 393.500 224.500z" fill="#f9b568"/>
<path d="M393.500 224.500C398 227 402 232 404 238C406 244 408 252 409 259C406 256 404 250 403 246C401 238 398 230 393.500 224.500z" fill="#f0913a"/>
<path d="M420.500 219.500C424 224 425 232 424 240C422 246 418 248 414 246C412 238 414 226 420.500 219.500z" fill="#f7a650"/>
<path d="M420.500 219.500C422 226 422 236 420 244" stroke="#ea8428" stroke-width="1" fill="none"/>
<path d="M424 238C428 236 431 238 431 242" stroke="#e6761c" stroke-width="1.200" fill="none"/>
<path d="M402.500 241.500C409 250 415 266 417.500 281L398 288C392 282 388 275 387.500 268C393 262 398 252 402.500 241.500z" fill="#0d5f49"/>
<path d="M400 266C408 268 415 274 418 282L406 287C401 281 399 273 400 266z" fill="#1b8577"/>
<path d="M419 272C424 270 429 274 431 280L431 306L420 300C418 292 418 280 419 272z" fill="#e3600e"/>
<path d="M351 326C351 312 357 297 362 288C366 280 372 274 380 273C390 271 398 274 404 277C412 276 420 280 424 284L432 287L442 298C448 306 448 320 444 330C447 342 440 354 428 358C416 364 398 363 388 358C380 353 372 347 368 343C359 340 352 334 351 326z" fill="#e3600e"/>
<ellipse cx="368" cy="300" rx="10" ry="6" transform="rotate(-50 368 300)" fill="#ef7a1c" stroke="#d95a0c" stroke-width="0.700"/>
<ellipse cx="381" cy="284" rx="10" ry="6" transform="rotate(-25 381 284)" fill="#ef7a1c" stroke="#d95a0c" stroke-width="0.700"/>
<ellipse cx="399" cy="283" rx="10" ry="5.5" transform="rotate(5 399 283)" fill="#ef7a1c" stroke="#d95a0c" stroke-width="0.700"/>
<ellipse cx="415" cy="289" rx="9" ry="5" transform="rotate(25 415 289)" fill="#ef7a1c" stroke="#d95a0c" stroke-width="0.700"/>
<ellipse cx="359" cy="318" rx="6" ry="10" transform="rotate(10 359 318)" fill="#ef7a1c" stroke="#d95a0c" stroke-width="0.700"/>
<ellipse cx="363" cy="337" rx="9" ry="5" transform="rotate(35 363 337)" fill="#ef7a1c" stroke="#d95a0c" stroke-width="0.700"/>
<ellipse cx="436" cy="308" rx="6" ry="10" transform="rotate(-15 436 308)" fill="#ef7a1c" stroke="#d95a0c" stroke-width="0.700"/>
<ellipse cx="440" cy="334" rx="5" ry="10" transform="rotate(10 440 334)" fill="#ef7a1c" stroke="#d95a0c" stroke-width="0.700"/>
<ellipse cx="378" cy="350" rx="9" ry="4.5" transform="rotate(25 378 350)" fill="#ef7a1c" stroke="#d95a0c" stroke-width="0.700"/>
<ellipse cx="388" cy="296" rx="9" ry="5" transform="rotate(-20 388 296)" fill="#ef7a1c" stroke="#d95a0c" stroke-width="0.700"/>
<ellipse cx="408" cy="296" rx="9" ry="5" transform="rotate(10 408 296)" fill="#ef7a1c" stroke="#d95a0c" stroke-width="0.700"/>
<ellipse cx="371" cy="316" rx="5" ry="9" transform="rotate(20 371 316)" fill="#ef7a1c" stroke="#d95a0c" stroke-width="0.700"/>
<path d="M374 312C376 303 384 298 393 298C399 299 402 304 401 310C398 318 390 324 381 324C376 322 373 318 374 312z" fill="#f6a24c" stroke="#dc5a0c" stroke-width="0.900"/>
<path d="M396 312C400 304 410 301 419 303C426 306 430 314 428 322C424 330 414 333 405 331C398 328 394 320 396 312z" fill="#f7a854" stroke="#dc5a0c" stroke-width="0.900"/>
<path d="M365.500 330C368 325 376 323 384 325C389 328 390 333 387 337C380 339 372 338 366 335C365 333 365 331 365.500 330z" fill="#f39a42" stroke="#dc5a0c" stroke-width="0.900"/>
<path d="M420 322C426 318 434 320 438 326C440 334 438 342 432 346C426 344 420 336 420 322z" fill="#f6a24c" stroke="#dc5a0c" stroke-width="0.900"/>
<path d="M384 340C388 333 398 331 408 333C416 336 420 342 418 348C410 352 396 352 388 348C385 346 384 343 384 340z" fill="#f39c44" stroke="#dc5a0c" stroke-width="0.900"/>
<path d="M386 350C388 341 400 336 414 337C424 338 431 343 431 350C430 357 420 361 408 361C396 361 386 357 386 350z" fill="#f9b062" stroke="#dc5a0c" stroke-width="0.900"/>
<path d="M392 349C398 343 416 341 426 347" stroke="#fcc88c" stroke-width="2" fill="none" stroke-linecap="round"/>
<path d="M380 308C384 303 390 301 396 302" stroke="#fbbd76" stroke-width="2" fill="none" stroke-linecap="round"/>
<path d="M402 312C406 307 414 305 421 308" stroke="#fbbd76" stroke-width="2" fill="none" stroke-linecap="round"/>
<path d="M397.0 362.0C383.8 359.4 367.6 368.4 361.0 382.0C376.0 383.6 392.2 374.6 397.0 362.0z" fill="#0d5f49"/>
<path d="M382.0 392.0C369.9 396.9 363.6 412.2 368.0 426.0C380.8 419.4 387.1 404.1 382.0 392.0z" fill="#0d5f49"/>
<path d="M405.0 404.0C395.5 407.6 392.1 418.4 397.5 428.0C407.4 423.2 410.8 412.4 405.0 404.0z" fill="#0d5f49"/>
<path d="M414.0 364.0C415.6 374.3 426.4 383.7 438.0 385.0C435.2 373.7 424.4 364.2 414.0 364.0z" fill="#14705f"/>
<path d="M405.0 362.0C403.0 366.7 405.7 371.6 411.0 373.0C412.7 367.8 410.0 362.8 405.0 362.0z" fill="#38a88f"/>
<path d="M423.0 359.0C425.8 364.1 433.0 366.3 439.0 364.0C435.4 358.7 428.2 356.4 423.0 359.0z" fill="#38a88f"/>
<path d="M431.0 389.0C427.1 396.3 428.5 408.4 434.0 416.0C437.7 407.4 436.4 395.2 431.0 389.0z" fill="#38a88f"/>
<path d="M400.0 360.0C396.5 362.2 394.7 367.6 396.0 372.0C399.7 369.2 401.5 363.8 400.0 360.0z" fill="#e9f4ef"/>
<path d="M326 342C325 331 329 322 337 320.500C341 321 344 325 345 330C346 323 349 319 354 318.500C359 321 360 331 357 340C361 348 362 362 359 374C357 383 350 390 342 390C336 390 330 386 327 381C322 386 314 388 309 383C305 378 306 372 309 368C303 366 301 358 304 353C308 347 318 346 326 342z" fill="#fde6b4"/>
<path d="M337 321C340 328 341 336 340 344M345 330C346 336 346 340 345 344M309 368C314 366 320 366 324 368" stroke="#f0c988" stroke-width="1" fill="none"/>
<path d="M338 360l3 9M343 359l3 10M348 360l3 9M353 362l2 8M340 374l5 8M346 373l4 8M334 362l2 8M330 324l2 6M350 323l1 6" stroke="#ee9a3a" stroke-width="1.300" fill="none"/>
<circle cx="342" cy="372" r="4" fill="#f4b45a" opacity="0.7"/>
<path d="M349 262C354 258 359 262 358 268C357 274 353 279 349 282C356 281 361 286 359 292C356 299 348 299 345 301C341 304 336 303 333 299C327 298 322 293 323 287C324 281 330 279 334 279C336 272 342 266 349 262z" fill="#fbdac8"/>
<path d="M330 288C336 284 346 284 352 288" stroke="#ee8f98" stroke-width="1.200" fill="none"/>
<ellipse cx="341" cy="281.500" rx="4.500" ry="2.600" fill="#e5647c"/>
<path d="M341 284L340 298M336 285L330 294M346 285L353 293" stroke="#f2b0ae" stroke-width="1" fill="none"/>
<path d="M375.0 254.0 L373.0 266.0 L372.0 275.0" stroke="#2c8a6a" stroke-width="1.2" fill="none" stroke-linecap="round" stroke-linejoin="round"/>
<path d="M379.0 254.0 L381.0 266.0 L381.0 273.0" stroke="#2c8a6a" stroke-width="1.2" fill="none" stroke-linecap="round" stroke-linejoin="round"/>
<g transform="translate(376.5 249.5) rotate(0) scale(1.2 0.7)"><ellipse cx="0.0" cy="-7.2" rx="7.8" ry="6.4" transform="rotate(-90 0.0 -7.2)" fill="#fbdac8"/><ellipse cx="6.8" cy="-2.2" rx="7.8" ry="6.4" transform="rotate(-18 6.8 -2.2)" fill="#fbdac8"/><ellipse cx="4.2" cy="5.8" rx="7.8" ry="6.4" transform="rotate(54 4.2 5.8)" fill="#fbdac8"/><ellipse cx="-4.2" cy="5.8" rx="7.8" ry="6.4" transform="rotate(126 -4.2 5.8)" fill="#fbdac8"/><ellipse cx="-6.8" cy="-2.2" rx="7.8" ry="6.4" transform="rotate(198 -6.8 -2.2)" fill="#fbdac8"/><circle cx="0" cy="0" r="3.5" fill="#f2a0a4" opacity="0.6"/><circle cx="0" cy="0" r="2.1" fill="#e5506c"/></g>
<path d="M388 250L394 248" stroke="#f8c9a0" stroke-width="2" stroke-linecap="round"/>
<g transform="translate(398.8 387.8) rotate(0) scale(1.0 1.0)"><ellipse cx="0.0" cy="-12.4" rx="13.9" ry="11.4" transform="rotate(-90 0.0 -12.4)" fill="#fbdac8"/><ellipse cx="11.8" cy="-3.8" rx="13.9" ry="11.4" transform="rotate(-18 11.8 -3.8)" fill="#fbdac8"/><ellipse cx="7.3" cy="10.0" rx="13.9" ry="11.4" transform="rotate(54 7.3 10.0)" fill="#fbdac8"/><ellipse cx="-7.3" cy="10.0" rx="13.9" ry="11.4" transform="rotate(126 -7.3 10.0)" fill="#fbdac8"/><ellipse cx="-11.8" cy="-3.8" rx="13.9" ry="11.4" transform="rotate(198 -11.8 -3.8)" fill="#fbdac8"/><path d="M0 0L0.0 -18.0" stroke="#f3a6a6" stroke-width="2.0" stroke-linecap="round" opacity="0.75"/><path d="M0 0L17.1 -5.6" stroke="#f3a6a6" stroke-width="2.0" stroke-linecap="round" opacity="0.75"/><path d="M0 0L10.6 14.6" stroke="#f3a6a6" stroke-width="2.0" stroke-linecap="round" opacity="0.75"/><path d="M0 0L-10.6 14.6" stroke="#f3a6a6" stroke-width="2.0" stroke-linecap="round" opacity="0.75"/><path d="M0 0L-17.1 -5.6" stroke="#f3a6a6" stroke-width="2.0" stroke-linecap="round" opacity="0.75"/><circle cx="0" cy="0" r="7.3" fill="#f08c92" opacity="0.6"/><circle cx="0" cy="0" r="4.3" fill="#e64866"/></g>
<g transform="translate(450.5 369.0) rotate(35) scale(0.88 1.12)"><ellipse cx="3.8" cy="-10.3" rx="12.4" ry="10.2" transform="rotate(-70 3.8 -10.3)" fill="#fbdac8"/><ellipse cx="11.0" cy="0.4" rx="12.4" ry="10.2" transform="rotate(2 11.0 0.4)" fill="#fbdac8"/><ellipse cx="3.0" cy="10.6" rx="12.4" ry="10.2" transform="rotate(74 3.0 10.6)" fill="#fbdac8"/><ellipse cx="-9.1" cy="6.2" rx="12.4" ry="10.2" transform="rotate(146 -9.1 6.2)" fill="#fbdac8"/><ellipse cx="-8.7" cy="-6.8" rx="12.4" ry="10.2" transform="rotate(218 -8.7 -6.8)" fill="#fbdac8"/><path d="M0 0L5.5 -15.0" stroke="#f3a6a6" stroke-width="1.8" stroke-linecap="round" opacity="0.75"/><path d="M0 0L16.0 0.6" stroke="#f3a6a6" stroke-width="1.8" stroke-linecap="round" opacity="0.75"/><path d="M0 0L4.4 15.4" stroke="#f3a6a6" stroke-width="1.8" stroke-linecap="round" opacity="0.75"/><path d="M0 0L-13.3 8.9" stroke="#f3a6a6" stroke-width="1.8" stroke-linecap="round" opacity="0.75"/><path d="M0 0L-12.6 -9.9" stroke="#f3a6a6" stroke-width="1.8" stroke-linecap="round" opacity="0.75"/><circle cx="0" cy="0" r="5.8" fill="#f08c92" opacity="0.6"/><circle cx="0" cy="0" r="3.4" fill="#e64866"/></g>
<path d="M476.0 289.0C481.3 289.3 486.7 284.8 488.0 279.0C482.1 279.2 476.7 283.7 476.0 289.0z" fill="#0d5f49"/>
<g transform="translate(472.5 294.5) rotate(0) scale(1.0 1.0)"><ellipse cx="0.0" cy="-8.8" rx="9.6" ry="7.9" transform="rotate(-90 0.0 -8.8)" fill="#fde4a4"/><ellipse cx="8.4" cy="-2.7" rx="9.6" ry="7.9" transform="rotate(-18 8.4 -2.7)" fill="#fde4a4"/><ellipse cx="5.2" cy="7.1" rx="9.6" ry="7.9" transform="rotate(54 5.2 7.1)" fill="#fde4a4"/><ellipse cx="-5.2" cy="7.1" rx="9.6" ry="7.9" transform="rotate(126 -5.2 7.1)" fill="#fde4a4"/><ellipse cx="-8.4" cy="-2.7" rx="9.6" ry="7.9" transform="rotate(198 -8.4 -2.7)" fill="#fde4a4"/><circle cx="0" cy="0" r="4.3" fill="#f2a136"/></g>
<circle cx="472.500" cy="294.500" r="6.500" fill="#f7bb58" opacity="0.6"/>
</svg>
<div class="a ltr" id="LR" style="left:261px;top:126px;transform:scaleX(0.72);font-size:184px">R</div>
<div class="a ltr" id="LD" style="left:421px;top:194px;transform:scaleX(0.894);font-weight:normal;-webkit-text-stroke:6.500px #fff;font-size:170.800px;line-height:170.800px">D</div>
<div class="a ltr" id="LE" style="left:307px;top:312px;transform:scaleX(0.697)">E</div>
<div class="a" style="left:613px;top:108px;width:29.500px;height:64px;background:#4f4f4f;border-radius:3px"></div>
<div class="a" style="left:613px;top:108px;width:29.500px;height:11px;background:#3e3e3e;border-radius:3px 3px 0 0"></div>
<svg style="left:618px;top:111px" width="8" height="6" viewBox="0 0 8 6" fill="#d4d4d4"><path d="M0.300 0.300L3.300 3 0.300 5.700zM4.300 0.300L7.300 3 4.300 5.700z"/></svg>
<svg style="left:633px;top:111px" width="6" height="6" viewBox="0 0 6 6"><path d="M0.600 0.600L5.400 5.400M5.400 0.600L0.600 5.400" stroke="#e0e0e0" stroke-width="1.500" fill="none"/></svg>
<div class="a" style="left:620px;top:122px;width:16px;height:3px;background:repeating-linear-gradient(90deg,#464646 0 1px,#535353 1px 2px)"></div>
<span class="t" style="left:623.500px;top:130px;font-size:13px;line-height:14px;color:#f0f0f0">A</span>
<div class="a" style="left:633.500px;top:131px;width:1px;height:12.500px;background:#f0f0f0"></div>
<span class="t" style="left:624px;top:151.500px;font-size:14px;line-height:15px;color:#f0f0f0;font-weight:bold">¶</span>

<div id="rightdock" class="a"></div><div id="dockgap" class="a"></div>
<svg style="left:791px;top:57px" width="9" height="5" viewBox="0 0 9 5" fill="#c8c8c8"><path d="M3.500 0L0.500 2.500 3.500 5zM8 0L5 2.500 8 5z"/></svg>
<svg style="left:984px;top:57px" width="9" height="5" viewBox="0 0 9 5" fill="#c8c8c8"><path d="M0.500 0L3.500 2.500 0.500 5zM5 0L8 2.500 5 5z"/></svg>
<div class="a" style="left:773px;top:64px;width:29px;height:30px;background:#535353"></div>
<div class="a" style="left:780px;top:67px;width:16px;height:3px;background:repeating-linear-gradient(90deg,#4a4a4a 0 1px,#565656 1px 2px)"></div>
<div class="a" style="left:773px;top:96px;width:29px;height:30px;background:#535353"></div>
<div class="a" style="left:780px;top:99px;width:16px;height:3px;background:repeating-linear-gradient(90deg,#4a4a4a 0 1px,#565656 1px 2px)"></div>
<div class="a" style="left:773px;top:128px;width:29px;height:53px;background:#535353"></div>
<div class="a" style="left:780px;top:131px;width:16px;height:3px;background:repeating-linear-gradient(90deg,#4a4a4a 0 1px,#565656 1px 2px)"></div>
<div class="a" style="left:773px;top:183px;width:29px;height:30px;background:#535353"></div>
<div class="a" style="left:780px;top:186px;width:16px;height:3px;background:repeating-linear-gradient(90deg,#4a4a4a 0 1px,#565656 1px 2px)"></div>
<div class="a" style="left:773px;top:215px;width:29px;height:365px;background:#535353"></div>
<svg style="left:782px;top:75px" width="14.500" height="15" viewBox="0 0 17 18"><rect x="1" y="1" width="4" height="4" fill="none" stroke="#e6e6e6" stroke-width="1.600"/><rect x="1" y="6.500" width="4" height="4" fill="none" stroke="#e6e6e6" stroke-width="1.600"/><rect x="0.300" y="12" width="5.400" height="5.400" fill="#e6e6e6"/><path d="M9 3.500c5-1 6.500 5 2.500 8" fill="none" stroke="#e6e6e6" stroke-width="1.900"/><path d="M7.500 1l.500 4.500 3.500-2.500z" fill="#e6e6e6"/></svg>
<svg style="left:781px;top:106px" width="15.500" height="14.500" viewBox="0 0 18 17"><path d="M6 1.500l4 2v4.500l-4 2-4-2V3.500z" fill="none" stroke="#e6e6e6" stroke-width="1.200"/><path d="M2 3.500l4 2 4-2M6 5.500v4.500" stroke="#e6e6e6" stroke-width="0.900" fill="none"/><rect x="12.500" y="1.500" width="3.500" height="3" fill="#e6e6e6"/><rect x="12.500" y="6.500" width="3.500" height="3" fill="#e6e6e6"/><rect x="1.500" y="12.500" width="14.500" height="3.500" fill="#e6e6e6"/></svg>
<svg style="left:783px;top:140px" width="13" height="15" viewBox="0 0 13 15"><rect x="0.800" y="0.800" width="11.400" height="13.400" fill="none" stroke="#e6e6e6" stroke-width="1.500"/><rect x="2.500" y="2.500" width="4" height="4" fill="#9a9a9a"/><rect x="7.500" y="2.500" width="3" height="4" fill="#e6e6e6"/><rect x="2.500" y="8" width="8" height="2" fill="#e6e6e6"/></svg>
<svg style="left:783px;top:162px" width="13" height="15" viewBox="0 0 13 15"><path d="M0.800 0.800h11.400v9.500l-4 4H0.800z" fill="none" stroke="#e6e6e6" stroke-width="1.500"/><rect x="3" y="3" width="7" height="6" fill="#9a9a9a"/><path d="M8 14v-4h4" fill="none" stroke="#e6e6e6" stroke-width="1.200"/></svg>
<svg style="left:781px;top:192px" width="16" height="19" viewBox="0 0 16 19" fill="none" stroke="#e6e6e6"><circle cx="5.500" cy="9.500" r="4.300" stroke-width="1.400"/><circle cx="5.500" cy="9.500" r="1.600" stroke-width="1.200"/><path d="M8.500 7l4.500-4.500M8.500 12l4.500 4.500" stroke-width="1.300"/><circle cx="13.500" cy="2.500" r="1.600" fill="#e6e6e6" stroke="none"/><circle cx="13.500" cy="16.500" r="1.600" fill="#e6e6e6" stroke="none"/></svg>
<div class="a" style="left:802px;top:64px;width:2px;height:516px;background:#535353"></div><div class="a" style="left:802px;top:64px;width:2px;height:410px;background:#3a3a3a"></div>
<div class="a" style="left:804px;top:64px;width:191px;height:23px;background:#434343;border-top:1px solid #3a3a3a"></div>
<div class="a" style="left:804px;top:64px;width:34px;height:23px;background:#535353"></div>
<div class="a" style="left:839px;top:65px;width:34px;height:22px;background:#464646;border-right:1px solid #3c3c3c"></div>
<div class="a" style="left:804px;top:87px;width:191px;height:170px;background:#535353"></div>
<span class="t" style="left:811.500px;top:69px;font-size:10px;color:#f2f2f2">颜色</span>
<span class="t" style="left:846px;top:69px;font-size:9.800px;color:#b8b8b8">色板</span>
<svg style="left:983.500px;top:71px" width="8" height="7" viewBox="0 0 8 7" fill="#8e8e8e"><rect width="8" height="1.200"/><rect y="1.900" width="8" height="1.200"/><rect y="3.800" width="8" height="1.200"/><rect y="5.700" width="8" height="1.200"/></svg>
<div class="a" style="left:820px;top:102px;width:15px;height:15px;background:#fff;border:1px solid #3a3a3a;box-shadow:0 0 0 1px #cfcfcf inset"></div>
<div class="a" style="left:812px;top:94px;width:16px;height:16px;background:#fff;border:1px solid #3a3a3a;outline:1px solid #8a8a8a;box-shadow:0 0 0 1px #cfcfcf inset"></div>
<div class="a" style="left:840px;top:91px;width:115px;height:149px;background:linear-gradient(to bottom,rgba(0,0,0,0),#000),linear-gradient(to right,#fff,#f00)"></div>
<div class="a" style="left:840px;top:91px;width:8px;height:8px;overflow:hidden"><div class="a" style="left:-4.500px;top:-4.500px;width:8px;height:8px;border-radius:50%;background:#fff;border:1.300px solid #222"></div></div>
<div class="a" style="left:969px;top:91px;width:15px;height:149px;background:linear-gradient(to bottom,#f00 0%,#f0f 17%,#00f 33%,#0ff 50%,#0f0 67%,#ff0 83%,#f00 100%)"></div>
<svg style="left:959px;top:235px" width="8" height="9" viewBox="0 0 8 9"><path d="M1 0.800L7 4.500 1 8.200z" fill="#fff" stroke="#333" stroke-width="0.800"/></svg>
<div class="a" style="left:995px;top:54px;width:5px;height:526px;background:#535353;border-left:1.500px solid #3a3a3a"></div>
<div class="a" style="left:804px;top:256.500px;width:191px;height:23.500px;background:#434343"></div>
<div class="a" style="left:804px;top:258px;width:35px;height:22px;background:#535353"></div>
<div class="a" style="left:840px;top:259px;width:34px;height:21px;background:#464646;border-right:1px solid #3c3c3c"></div>
<div class="a" style="left:875px;top:259px;width:34px;height:21px;background:#464646;border-right:1px solid #3c3c3c"></div>
<div class="a" style="left:804px;top:280px;width:191px;height:300px;background:#535353"></div>
<span class="t" style="left:811px;top:264px;font-size:10.500px;color:#f2f2f2">图层</span>
<span class="t" style="left:847px;top:264px;font-size:10px;color:#b4b4b4">通道</span>
<span class="t" style="left:882px;top:264px;font-size:10px;color:#b4b4b4">路径</span>
<svg style="left:983.500px;top:267px" width="8" height="7" viewBox="0 0 8 7" fill="#8e8e8e"><rect width="8" height="1.200"/><rect y="1.900" width="8" height="1.200"/><rect y="3.800" width="8" height="1.200"/><rect y="5.700" width="8" height="1.200"/></svg>
<div class="a" style="left:808px;top:288px;width:67px;height:17px;background:#404040;border:1px solid #5c5c5c;border-radius:2px"></div>
<svg style="left:813px;top:291px" width="10" height="10" viewBox="0 0 10 10" fill="none" stroke="#e8e8e8" stroke-width="1.500"><circle cx="4" cy="4" r="2.800"/><path d="M6.200 6.200L9 9"/></svg>
<span class="t" style="left:826px;top:290px;font-size:9.500px;color:#ededed;font-weight:bold">类型</span>
<svg style="left:866px;top:294px" width="7" height="5" viewBox="0 0 7 5"><path d="M0.700 0.800L3.500 3.800 6.300 0.800" stroke="#c8c8c8" stroke-width="1.100" fill="none"/></svg>
<svg style="left:888px;top:291px" width="10" height="9" viewBox="0 0 10 9"><rect x="0.600" y="0.600" width="8.800" height="7.800" fill="none" stroke="#e4e4e4" stroke-width="1.200"/><path d="M2 7l2-3 1.500 2 1-1L8 7z" fill="#e4e4e4"/></svg>
<svg style="left:908px;top:291px" width="10" height="10" viewBox="0 0 10 10"><circle cx="5" cy="5" r="4" fill="none" stroke="#e4e4e4" stroke-width="1.300"/><path d="M2.200 7.800A4 4 0 0 0 7.800 2.200z" fill="#e4e4e4"/></svg>
<span class="t" style="left:926.500px;top:289px;font-family:'Liberation Serif',serif;font-size:13px;font-weight:bold;color:#e4e4e4">T</span>
<svg style="left:945px;top:291px" width="10" height="10" viewBox="0 0 10 10"><rect x="1.500" y="1.500" width="7" height="7" fill="none" stroke="#e4e4e4" stroke-width="1.200"/><rect x="0" y="0" width="2.600" height="2.600" fill="#e4e4e4"/><rect x="7.400" y="0" width="2.600" height="2.600" fill="#e4e4e4"/><rect x="0" y="7.400" width="2.600" height="2.600" fill="#e4e4e4"/><rect x="7.400" y="7.400" width="2.600" height="2.600" fill="#e4e4e4"/></svg>
<svg style="left:964px;top:290px" width="10" height="11" viewBox="0 0 10 11"><path d="M3 1h4.500L9.500 3v7.500H3z" fill="none" stroke="#e4e4e4" stroke-width="1.100"/><rect x="0.500" y="5.500" width="5.500" height="4.500" fill="#e4e4e4"/><path d="M1.700 5.500V4a1.500 1.500 0 0 1 3 0v1.500" fill="none" stroke="#e4e4e4" stroke-width="1"/></svg>
<div class="a" style="left:986px;top:289px;width:7px;height:15px;background:#3c3c3c;border-radius:3.500px"></div>
<div class="a" style="left:986px;top:288px;width:7px;height:7px;background:#f0f0f0;border-radius:50%"></div>
<div class="a" style="left:804px;top:306.500px;width:191px;height:1px;background:#494949"></div>
<div class="a" style="left:804px;top:330.500px;width:191px;height:1px;background:#494949"></div>
<div class="a" style="left:808px;top:311.500px;width:91px;height:17px;background:#404040;border:1px solid #5c5c5c;border-radius:2px"></div>
<span class="t" style="left:814px;top:313.500px;font-size:9.500px;color:#ededed;font-weight:bold">正常</span>
<svg style="left:890px;top:317px" width="7" height="5" viewBox="0 0 7 5"><path d="M0.700 0.800L3.500 3.800 6.300 0.800" stroke="#c8c8c8" stroke-width="1.100" fill="none"/></svg>
<span class="t" style="left:905px;top:313.500px;font-size:9.500px;color:#e2e2e2;letter-spacing:0.200px">不透明度:</span>
<div class="a" style="left:950px;top:311.500px;width:30px;height:17px;background:#404040;border:1px solid #5c5c5c;border-radius:2px 0 0 2px"></div>
<span class="t" style="left:953.500px;top:313.500px;font-size:9.500px;color:#f0f0f0;letter-spacing:-0.600px">100%</span>
<div class="a" style="left:981px;top:311.500px;width:12px;height:17px;background:#404040;border:1px solid #5c5c5c;border-radius:0 2px 2px 0"></div>
<svg style="left:983.500px;top:317px" width="7" height="5" viewBox="0 0 7 5"><path d="M0.700 0.800L3.500 3.800 6.300 0.800" stroke="#c8c8c8" stroke-width="1.100" fill="none"/></svg>
<span class="t" style="left:810px;top:336px;font-size:9.500px;color:#c8c8c8">锁定:</span>
<svg style="left:839px;top:337px" width="10" height="9" viewBox="0 0 10 9"><rect x="0.500" y="0.500" width="9" height="8" fill="none" stroke="#9a9a9a" stroke-width="1"/><rect x="1" y="1" width="2.700" height="2.300" fill="#9a9a9a"/><rect x="6.300" y="1" width="2.700" height="2.300" fill="#9a9a9a"/><rect x="3.700" y="3.300" width="2.600" height="2.400" fill="#9a9a9a"/><rect x="1" y="5.700" width="2.700" height="2.300" fill="#9a9a9a"/><rect x="6.300" y="5.700" width="2.700" height="2.300" fill="#9a9a9a"/></svg>
<svg style="left:856px;top:336px" width="10" height="11" viewBox="0 0 10 11"><path d="M9 1L4.500 6.500" stroke="#a8a8a8" stroke-width="1.800" stroke-linecap="round"/><path d="M4 6.500c-1.500.200-2 1.500-2.500 3.500 2 0 3.500-.500 3.800-2.300z" fill="#a8a8a8"/></svg>
<svg style="left:873px;top:336px" width="11" height="11" viewBox="0 0 11 11"><path d="M5.500 0L3.700 2.200h1.300v2.800H2.200V3.700L0 5.500l2.200 1.800V6h2.800v2.800H3.700L5.500 11l1.800-2.200H6V6h2.800v1.300L11 5.500 8.800 3.700V5H6V2.200h1.300z" fill="#cfcfcf"/></svg>
<svg style="left:890px;top:336px" width="12" height="11" viewBox="0 0 12 11" fill="none" stroke="#cfcfcf" stroke-width="1.200"><path d="M2.500 0v8.500H12M0 2.500h9.500V11"/><path d="M9 2.500L11.500 0" stroke-width="1"/></svg>
<svg style="left:908px;top:336px" width="10" height="11" viewBox="0 0 10 11"><rect x="0.500" y="4.500" width="9" height="6.500" fill="#f0f0f0"/><path d="M2.500 4.500V3a2.500 2.500 0 0 1 5 0v1.500" fill="none" stroke="#f0f0f0" stroke-width="1.300"/><rect x="4.300" y="6.500" width="1.400" height="2.500" fill="#535353"/></svg>
<span class="t" style="left:924px;top:336px;font-size:9.500px;color:#c8c8c8">填充:</span>
<div class="a" style="left:950px;top:334px;width:30px;height:15.500px;background:#434343;border-radius:2px"></div>
<span class="t" style="left:953.500px;top:336px;font-size:9.500px;color:#f0f0f0;letter-spacing:-0.600px">100%</span>
<svg style="left:983.500px;top:340px" width="7" height="5" viewBox="0 0 7 5"><path d="M0.700 0.800L3.500 3.800 6.300 0.800" stroke="#c8c8c8" stroke-width="1.100" fill="none"/></svg>
<div class="a" style="left:828px;top:354.500px;width:156px;height:31.500px;background:#696969"></div>
<div class="a" style="left:804px;top:385.5px;width:180px;height:1px;background:#464646"></div>
<div class="a" style="left:804px;top:418.0px;width:180px;height:1px;background:#464646"></div>
<div class="a" style="left:804px;top:451.0px;width:180px;height:1px;background:#464646"></div>
<div class="a" style="left:804px;top:482.5px;width:180px;height:1px;background:#464646"></div>
<div class="a" style="left:827.500px;top:354px;width:1px;height:129px;background:#464646"></div>
<div class="a" style="left:804px;top:353.500px;width:180px;height:1px;background:#464646"></div>
<svg style="left:811px;top:365.75px" width="13" height="9" viewBox="0 0 13 9"><path d="M0.500 4.500C2.500 1.500 4.500 0.500 6.500 0.500s4 1 6 4c-2 3-4 4-6 4s-4-1-6-4z" fill="#f0f0f0"/><circle cx="6.500" cy="4.500" r="2.400" fill="#454545"/><circle cx="6.500" cy="4.500" r="1" fill="#f0f0f0"/></svg>
<span class="t" style="left:838.500px;top:360.25px;font-family:'Liberation Serif',serif;font-size:18px;line-height:20px;color:#f0f0f0">T</span>
<svg style="left:859px;top:364.25px" width="6" height="12" viewBox="0 0 6 12" fill="none" stroke="#e6e6e6" stroke-width="1.200"><rect x="1" y="0.800" width="4" height="4.600" rx="2"/><rect x="1" y="6.600" width="4" height="4.600" rx="2"/><path d="M3 4v4"/></svg>
<div class="a" style="left:869px;top:357.75px;width:25px;height:25px;background:#fff;border:1px solid #2e2e2e"></div>
<span class="t" style="left:901.500px;top:365.05px;font-size:9.500px;font-weight:bold;color:#f0f0f0;transform:scaleX(0.900);transform-origin:0 0">D</span>
<svg style="left:811px;top:397.75px" width="13" height="9" viewBox="0 0 13 9"><path d="M0.500 4.500C2.500 1.500 4.500 0.500 6.500 0.500s4 1 6 4c-2 3-4 4-6 4s-4-1-6-4z" fill="#f0f0f0"/><circle cx="6.500" cy="4.500" r="2.400" fill="#454545"/><circle cx="6.500" cy="4.500" r="1" fill="#f0f0f0"/></svg>
<span class="t" style="left:838.500px;top:392.25px;font-family:'Liberation Serif',serif;font-size:18px;line-height:20px;color:#f0f0f0">T</span>
<svg style="left:859px;top:396.25px" width="6" height="12" viewBox="0 0 6 12" fill="none" stroke="#e6e6e6" stroke-width="1.200"><rect x="1" y="0.800" width="4" height="4.600" rx="2"/><rect x="1" y="6.600" width="4" height="4.600" rx="2"/><path d="M3 4v4"/></svg>
<div class="a" style="left:869px;top:389.75px;width:25px;height:25px;background:#fff;border:1px solid #2e2e2e"></div>
<span class="t" style="left:901.500px;top:397.05px;font-size:9.500px;font-weight:bold;color:#f0f0f0;transform:scaleX(0.900);transform-origin:0 0">E</span>
<svg style="left:811px;top:430.5px" width="13" height="9" viewBox="0 0 13 9"><path d="M0.500 4.500C2.500 1.500 4.500 0.500 6.500 0.500s4 1 6 4c-2 3-4 4-6 4s-4-1-6-4z" fill="#f0f0f0"/><circle cx="6.500" cy="4.500" r="2.400" fill="#454545"/><circle cx="6.500" cy="4.500" r="1" fill="#f0f0f0"/></svg>
<span class="t" style="left:838.500px;top:425.0px;font-family:'Liberation Serif',serif;font-size:18px;line-height:20px;color:#f0f0f0">T</span>
<svg style="left:859px;top:429.0px" width="6" height="12" viewBox="0 0 6 12" fill="none" stroke="#e6e6e6" stroke-width="1.200"><rect x="1" y="0.800" width="4" height="4.600" rx="2"/><rect x="1" y="6.600" width="4" height="4.600" rx="2"/><path d="M3 4v4"/></svg>
<div class="a" style="left:869px;top:422.5px;width:25px;height:25px;background:#fff;border:1px solid #2e2e2e"></div>
<span class="t" style="left:901.500px;top:429.8px;font-size:9.500px;font-weight:bold;color:#f0f0f0;transform:scaleX(0.900);transform-origin:0 0">R</span>
<svg style="left:866.500px;top:355.25px" width="30" height="30" viewBox="0 0 30 30" fill="none" stroke="#f4f4f4" stroke-width="1.200"><path d="M0.600 6V0.600H6M24 0.600h5.400V6M29.400 24v5.400H24M6 29.400H0.600V24"/></svg>
<svg style="left:811px;top:463.5px" width="13" height="9" viewBox="0 0 13 9"><path d="M0.500 4.500C2.500 1.500 4.500 0.500 6.500 0.500s4 1 6 4c-2 3-4 4-6 4s-4-1-6-4z" fill="#f0f0f0"/><circle cx="6.500" cy="4.500" r="2.400" fill="#454545"/><circle cx="6.500" cy="4.500" r="1" fill="#f0f0f0"/></svg>
<div class="a" style="left:832px;top:455px;width:24.500px;height:19px;background:conic-gradient(#e4e8ea 25%,#fff 0 50%,#e4e8ea 0 75%,#fff 0) 0 0/5px 5px;border:1px solid #c8c8c8"></div>
<svg style="left:832px;top:455px" width="24" height="19" viewBox="0 0 24 19"><circle cx="11" cy="10" r="3.500" fill="#e8751a"/><circle cx="14" cy="8" r="2" fill="#f4b070"/><path d="M8 6l3 2M15 12l3 1M9 13l-2 2" stroke="#1b7a62" stroke-width="1.500"/><circle cx="9" cy="7" r="1.200" fill="#0d5f49"/></svg>
<span class="t" style="left:864.500px;top:462px;font-size:9.500px;color:#f0f0f0">图层 1</span>
<div class="a" style="left:923px;top:473px;width:44px;height:41px;background:#464646"></div>
<div class="a" style="left:934px;top:473px;width:11px;height:41px;background:#434343"></div>
<div class="a" style="left:945px;top:473px;width:11px;height:41px;background:#404040"></div>
<div class="a" style="left:956px;top:473px;width:11px;height:41px;background:#4a4a4a"></div>
<div class="a" style="left:786px;top:335px;width:205.600px;height:153px;border:3px solid #cc201e;border-width:3.200px 4.200px 4px 3px"></div>
<svg style="left:0;top:0" width="1000" height="582" viewBox="0 0 1000 582">
<path d="M976.1 378.5L924.8 367.4L928.3 365.1L913.6 367.4L926.4 374.9L924.0 371.5L975.9 380.1z" fill="#e0211d" stroke="#e0211d" stroke-width="0.600" stroke-linejoin="round"/>
<path d="M960.2 411.6L923.9 403.1L927.4 400.8L912.7 403.0L925.5 410.6L923.1 407.2L959.8 413.2z" fill="#e0211d" stroke="#e0211d" stroke-width="0.600" stroke-linejoin="round"/>
<path d="M949.6 440.9L923.9 437.0L927.1 434.4L912.7 438.0L926.1 444.4L923.4 441.2L949.4 442.5z" fill="#e0211d" stroke="#e0211d" stroke-width="0.600" stroke-linejoin="round"/>
</svg>
<div class="a" style="left:801px;top:523px;width:194px;height:57px;background:#4d4d4d;border-left:1.500px solid #3e3e3e"></div>
<svg style="left:0;top:0" width="1000" height="582" viewBox="0 0 1000 582" fill="#fff">
  <path d="M824.500 551L869.300 527l13.200 13.500h-8L867.500 535.500 840 550l-13 2.500z"/>
  <path d="M838.400 548h7.400v19.500h17.200v5H842.500c-2.800 0-4.100-1.500-4.100-4z"/>
  <path d="M845.800 548.500l9.400-2.300v3.300l-9.400 2.200z"/>
  <rect x="845.800" y="558.600" width="9.400" height="3"/>
  <rect x="855" y="546" width="4.600" height="23"/>
  <path d="M859 548l7.500-5.500h15.500v4.600h-14z"/>
  <path d="M859.600 557.300l4.500-4.600h16.300v4.600z"/>
  <path d="M859.600 562.800h18.500v-4h-14z"/>
  <path d="M859.600 569.800l4.500-4.300h15.500v4.300z"/>
  <g>
    <rect x="881" y="548.500" width="3.500" height="3.500"/><rect x="884.500" y="545" width="3.500" height="3.500"/><rect x="888" y="541.500" width="3" height="3.500"/>
    <rect x="884.500" y="552" width="3.500" height="3.500"/><rect x="888" y="548.500" width="3.500" height="3.500"/><rect x="891.500" y="545" width="3" height="3.500"/>
    <rect x="881" y="555.500" width="3.500" height="3.500"/><rect x="888" y="555.500" width="3.500" height="3.500"/><rect x="891.500" y="552" width="3.500" height="3.500"/>
    <rect x="884.500" y="559" width="3.500" height="3.500"/><rect x="891" y="559.500" width="3" height="3"/>
    <rect x="881" y="562.500" width="3.500" height="3.500"/><rect x="888" y="562.500" width="3" height="3"/>
    <rect x="878" y="566" width="3.500" height="3.500"/><rect x="884.500" y="566" width="3" height="3"/>
  </g>
  <rect x="879" y="564.500" width="11" height="8.500" rx="1"/><circle cx="884.500" cy="568.700" r="2.300" fill="#444"/>
</svg>
<span class="t" id="wm1" style="left:900px;top:535px;font-size:22px;line-height:28px;font-weight:900;color:#fff;letter-spacing:0.500px">系统之家</span>
<span class="t" id="wm2" style="left:891px;top:563px;font-family:'Liberation Serif',serif;font-size:10px;line-height:12px;color:#fff;letter-spacing:0.580px">XITONGZHIJIA.NET</span>
<div class="a" style="left:807px;top:557px;width:2.500px;height:2px;background:#e8e8e8"></div>
<div id="botline" class="a"></div>

</div>
</body>
</html>
